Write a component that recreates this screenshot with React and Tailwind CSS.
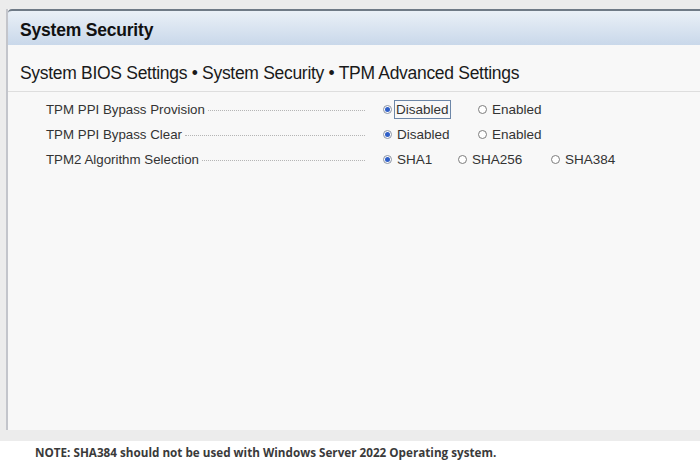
export default function App() {
  const rows = [
    {
      label: "TPM PPI Bypass Provision",
      options: [
        { text: "Disabled", checked: true, focus: true, w: "w-[95px]" },
        { text: "Enabled", w: "w-[80px]" },
      ],
    },
    {
      label: "TPM PPI Bypass Clear",
      options: [
        { text: "Disabled", checked: true, w: "w-[95px]" },
        { text: "Enabled", w: "w-[80px]" },
      ],
    },
    {
      label: "TPM2 Algorithm Selection",
      options: [
        { text: "SHA1", checked: true, w: "w-[75px]" },
        { text: "SHA256", w: "w-[93px]" },
        { text: "SHA384", w: "w-[80px]" },
      ],
    },
  ];

  return (
    <div className="w-[700px] h-[467px] bg-white overflow-hidden font-['Liberation_Sans',Arial,sans-serif]">
      <div className="bg-[#ececec] pl-[6px] pt-[9px] pb-[11px]">
        <div className="h-[421px] bg-[#f8f8f8] border-l-2 border-[#c3c5cb] flex flex-col">
          {/* header */}
          <div className="h-[36px] rounded-tl-[4px] border-t-2 border-[#6f7a86] bg-gradient-to-b from-[#eaf0f7] to-[#c9d8ea] flex items-center pl-[12px] pt-[5px]">
            <span className="text-[17.5px] font-bold text-[#111] tracking-[-0.2px]">
              System Security
            </span>
          </div>
          {/* breadcrumb */}
          <div className="h-[47px] flex items-center pl-[12px] pt-[10px] border-b border-[#dedede]">
            <span className="text-[17.5px] text-[#1a1a1a] tracking-[-0.3px]">
              System BIOS Settings • System Security • TPM Advanced Settings
            </span>
          </div>
          {/* rows */}
          <div className="pt-[5px]">
            {rows.map((row) => (
              <div key={row.label} className="h-[25px] flex items-center pl-[38px] text-[13.3px] text-[#333]">
                <div className="w-[319px] flex items-center">
                  <span className="whitespace-nowrap">{row.label}</span>
                  <span className="flex-1 ml-[3px] border-b border-dotted border-[#b5b5b5] mt-[2px]" />
                </div>
                <div className="flex items-center pl-[18px]">
                  {row.options.map((o) => (
                    <div key={o.text} className={`${o.w} flex items-center`}>
                      <span
                        className={`w-[9px] h-[9px] rounded-full border flex items-center justify-center mr-[4px] ${
                          o.checked ? "border-[#8a93a3] bg-white" : "border-[#7d7d7d] bg-white"
                        }`}
                      >
                        {o.checked && <span className="w-[5px] h-[5px] rounded-full bg-[#2f5fc8]" />}
                      </span>
                      <span
                        className={`text-[13.5px] leading-[17px] ${
                          o.focus ? "border border-[#6d87a8] px-[1px] -ml-[2px]" : "border border-transparent"
                        }`}
                      >
                        {o.text}
                      </span>
                    </div>
                  ))}
                </div>
              </div>
            ))}
          </div>
        </div>
      </div>
      <div className="pl-[35px] pt-[3px] text-[11.7px] font-bold text-[#3a3a3a] font-['Open_Sans',sans-serif]">
        NOTE: SHA384 should not be used with Windows Server 2022 Operating system.
      </div>
    </div>
  );
}
